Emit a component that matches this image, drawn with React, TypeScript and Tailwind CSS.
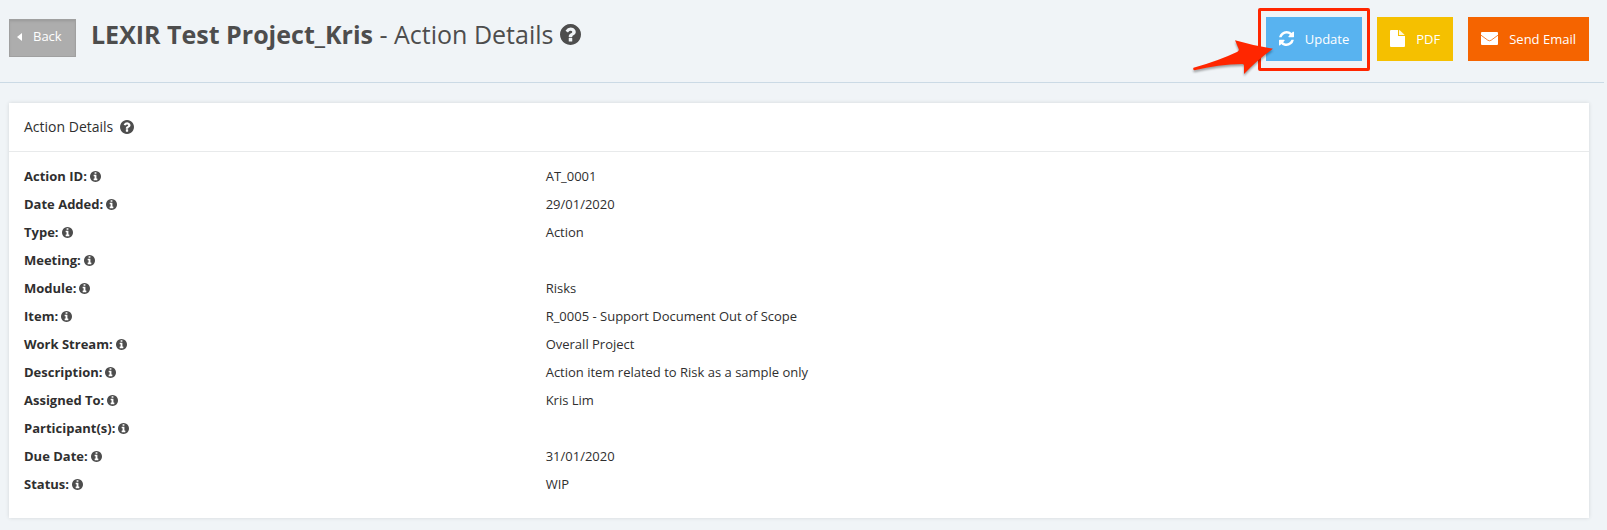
import type { ReactNode } from "react";

const CIRCLE =
  "m384 192q0 209-103 385.5t-279.5 279.5-385.5 103-385.5-103-279.5-279.5-103-385.5 103-385.5 279.5-279.5 385.5-103 385.5 103 279.5 279.5 103 385.5z";

const QUESTION =
  "M1024 1376v-192q0-14-9-23t-23-9h-192q-14 0-23 9t-9 23v192q0 14 9 23t23 9h192q14 0 23-9t9-23zm256-672q0-88-55.5-163t-138.5-116-170-41q-243 0-371 213-15 24 8 42l132 100q7 6 19 6 16 0 25-12 53-68 86-92 34-24 86-24 48 0 85.5 26t37.5 59q0 38-20 61t-68 45q-63 28-115.5 86.5t-52.5 125.5v36q0 14 9 23t23 9h192q14 0 23-9t9-23q0-19 21.5-49.5t54.5-49.5q32-18 49-28.5t46-35 44.5-48 28-60.5 12.5-81z" +
  CIRCLE;

const INFO =
  "M1152 1376v-160q0-14-9-23t-23-9h-96v-512q0-14-9-23t-23-9h-320q-14 0-23 9t-9 23v160q0 14 9 23t23 9h96v320h-96q-14 0-23 9t-9 23v160q0 14 9 23t23 9h448q14 0 23-9t9-23zm-128-896v-160q0-14-9-23t-23-9h-192q-14 0-23 9t-9 23v160q0 14 9 23t23 9h192q14 0 23-9t9-23zm640 416q0 209-103 385.5t-279.5 279.5-385.5 103-385.5-103-279.5-279.5-103-385.5 103-385.5 279.5-279.5 385.5-103 385.5 103 279.5 279.5 103 385.5z";

const REFRESH =
  "M1639 1056q0 5-1 7-64 268-268 434.5t-478 166.5q-146 0-282.5-55t-243.5-157l-129 129q-19 19-45 19t-45-19-19-45v-448q0-26 19-45t45-19h448q26 0 45 19t19 45-19 45l-137 137q71 66 161 102t187 36q134 0 250-65t186-179q11-17 53-117 8-23 30-23h192q13 0 22.5 9.5t9.5 22.5zm25-800v448q0 26-19 45t-45 19h-448q-26 0-45-19t-19-45 19-45l138-138q-148-137-349-137-134 0-250 65t-186 179q-11 17-53 117-8 23-30 23h-199q-13 0-22.5-9.5t-9.5-22.5v-7q65-268 270-434.5t480-166.5q146 0 284 55.5t245 156.5l130-129q19-19 45-19t45 19 19 45z";

function Glyph({ d, className }: { d: string; className: string }) {
  return (
    <svg viewBox="128 128 1536 1536" fill="currentColor" className={`shrink-0 ${className}`} aria-hidden="true">
      <path d={d} />
    </svg>
  );
}

function FileIcon() {
  return (
    <svg viewBox="0 0 15 17" className="h-[17px] w-[15px] shrink-0" aria-hidden="true">
      <path d="M0 1q0-1 1-1h7v6h7v10q0 1-1 1H1q-1 0-1-1z" fill="#fff" />
      <path d="M9 0q.6.1 1 .6l4 3.600q.5.500.6.900H9z" fill="#fff" fillOpacity=".85" />
    </svg>
  );
}

function EnvelopeIcon() {
  return (
    <svg viewBox="0 0 17 13" className="h-[13px] w-[17px] shrink-0" aria-hidden="true">
      <rect width="17" height="13" rx="1" fill="#fff" />
      <path d="M0 3.200L6.800 8.200q1.700 1.200 3.400 0L17 3.200" fill="none" stroke="#f56400" strokeWidth=".8" />
    </svg>
  );
}

function ActionButton({ color, icon, children }: { color: string; icon: ReactNode; children: ReactNode }) {
  return (
    <button type="button" className={`flex h-11 items-center gap-[11px] px-[13px] text-[13px] text-white ${color}`}>
      <span className="pb-0.5">{icon}</span>
      <span className="pt-0.5">{children}</span>
    </button>
  );
}

const fields = [
  ["Action ID:", "AT_0001"],
  ["Date Added:", "29/01/2020"],
  ["Type:", "Action"],
  ["Meeting:", ""],
  ["Module:", "Risks"],
  ["Item:", "R_0005 - Support Document Out of Scope"],
  ["Work Stream:", "Overall Project"],
  ["Description:", "Action item related to Risk as a sample only"],
  ["Assigned To:", "Kris Lim"],
  ["Participant(s):", ""],
  ["Due Date:", "31/01/2020"],
  ["Status:", "WIP"],
];

export default function App() {
  return (
    <div className="min-h-screen bg-[#f0f4f7] pb-3 font-['Open_Sans',sans-serif] text-[#2f2f2f]">
      <header className="mr-[3px] flex items-start justify-between border-b border-[#cbdae5] pt-[17px] pr-[15px] pb-[21px] pl-[9px]">
        <div className="flex items-start gap-[15px]">
          <button
            type="button"
            className="mt-0.5 flex h-[38px] w-[67px] items-center gap-[11px] bg-[#adadad] pb-0.5 pl-2 text-[13px] text-white shadow-[inset_0_2px_3px_rgba(0,0,0,0.12)] ring-1 ring-[#a0a0a0] ring-inset"
          >
            <svg viewBox="0 0 5 8" className="h-2 w-[5px]" fill="currentColor" aria-hidden="true">
              <path d="M5 0v8L0 4z" />
            </svg>
            <span>Back</span>
          </button>
          <h1 className="flex items-center gap-[7px] text-[25px] leading-[34px] text-[#4d4d4d]">
            <span>
              <b className="font-bold">LEXIR Test Project_Kris</b> - Action Details
            </span>
            <Glyph d={QUESTION} className="size-[21px]" />
          </h1>
        </div>
        <div className="flex gap-[15px]">
          <div className="relative">
            <ActionButton color="bg-[#58b3f0]" icon={<Glyph d={REFRESH} className="size-[15px]" />}>
              Update
            </ActionButton>
            <div className="pointer-events-none absolute -inset-x-2 -top-[9px] -bottom-[10px] rounded-xs border-[3px] border-[#ff2600]" />
            <svg
              viewBox="0 0 90 45"
              className="pointer-events-none absolute top-[21px] -left-[76px] h-[45px] w-[90px] max-w-none drop-shadow-[0_2px_1px_rgba(0,0,0,0.35)]"
              aria-hidden="true"
            >
              <path
                d="M3.500 29.700Q28 23 47.500 13.700Q49.500 12.500 48.500 10.500L45 2.300Q64 8 83 10.700Q67 22 54 36L54 27.500Q54 26 52.500 26Q28 26.500 4.500 32.300Q2.500 32 3.500 29.700Z"
                fill="#ff2600"
              />
            </svg>
          </div>
          <ActionButton color="bg-[#f5c000]" icon={<FileIcon />}>
            PDF
          </ActionButton>
          <ActionButton color="bg-[#f56400]" icon={<EnvelopeIcon />}>
            Send Email
          </ActionButton>
        </div>
      </header>

      <section className="mt-5 mr-[18px] ml-[9px] bg-white pb-5 shadow-[0_0_4px_rgba(0,0,0,0.12)]">
        <h2 className="flex h-[49px] items-center gap-[7px] border-b border-[#e8eaeb] px-[15px] text-sm font-medium">
          <span>Action Details</span>
          <Glyph d={QUESTION} className="size-[14px] text-[#4d4d4d]" />
        </h2>
        <dl className="pt-[10px] pl-[15px] text-[13px] leading-7">
          {fields.map(([label, value]) => (
            <div key={label} className="grid h-7 grid-cols-[1fr_2fr]">
              <dt className="flex items-center gap-[3px] font-bold">
                <span>{label}</span>
                <Glyph d={INFO} className="size-[11px] text-[#4d4d4d]" />
              </dt>
              <dd>{value}</dd>
            </div>
          ))}
        </dl>
      </section>
    </div>
  );
}
